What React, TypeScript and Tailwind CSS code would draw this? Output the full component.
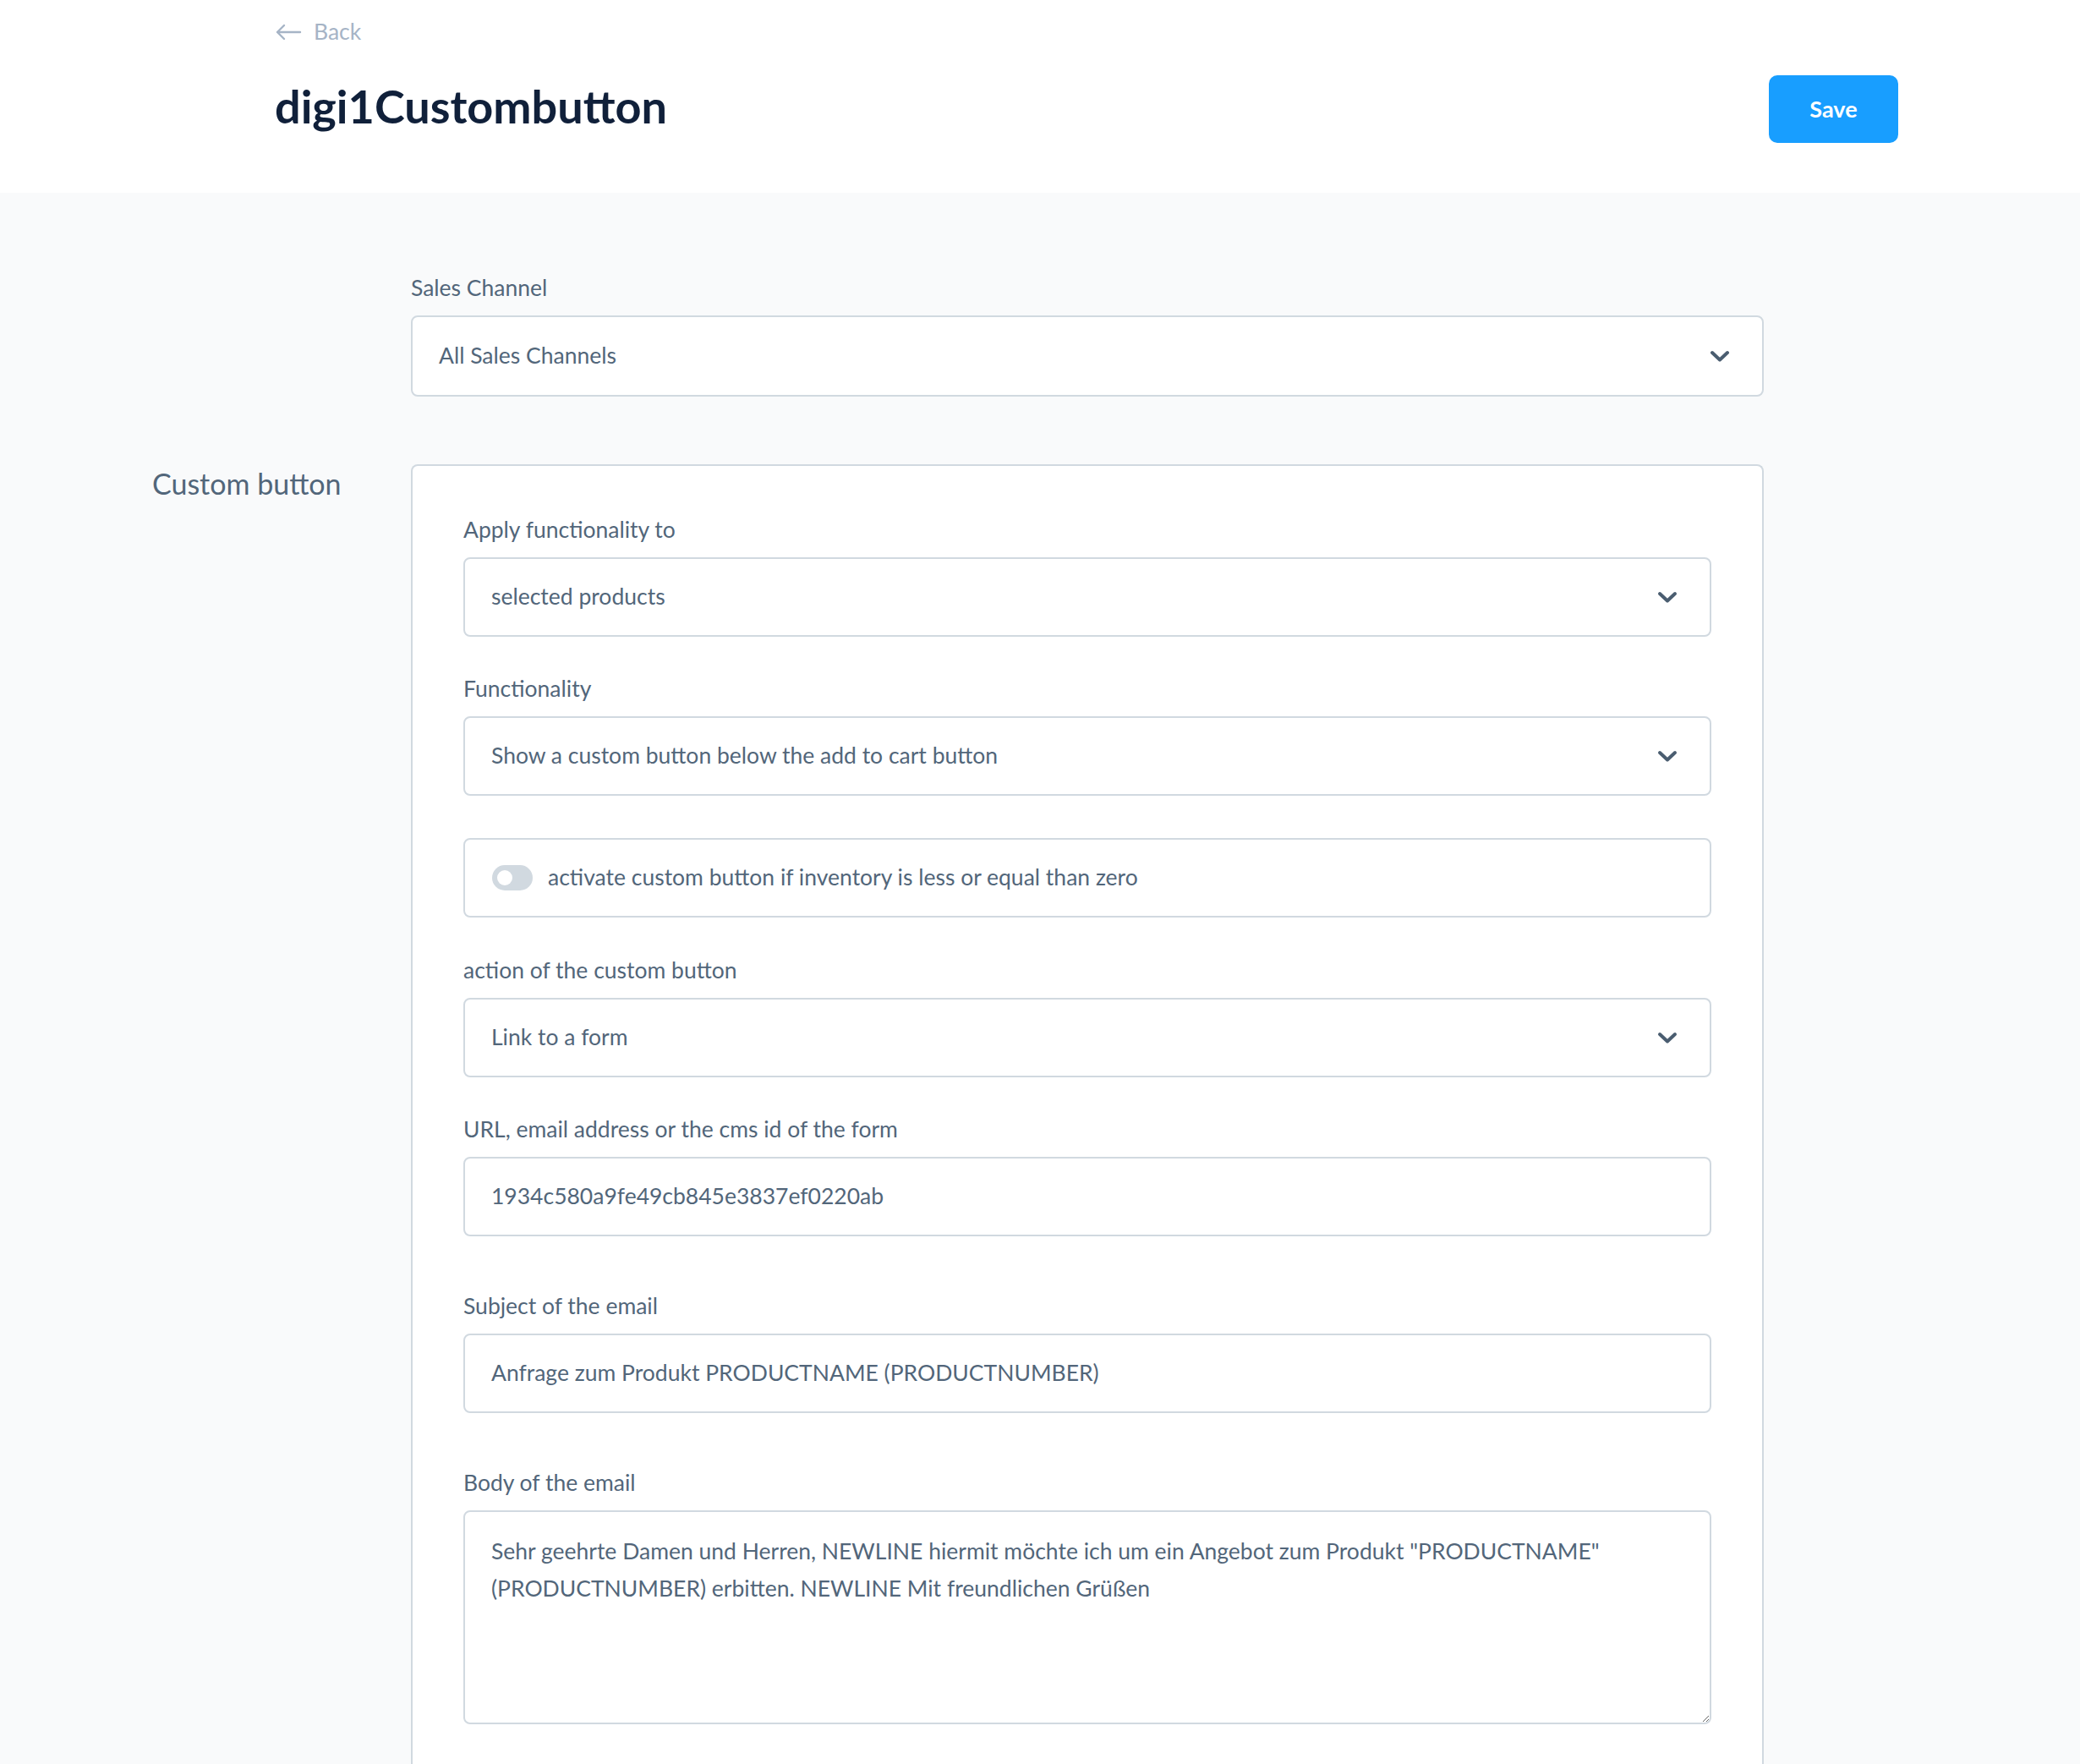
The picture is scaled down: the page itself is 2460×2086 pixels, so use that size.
import { ChangeEvent, useState } from "react"

const font = { fontFamily: "Lato, 'Noto Sans', sans-serif" }

function Chevron() {
  return (
    <svg className="w-[26px] h-[26px] text-[#4a5d70]" viewBox="0 0 26 26" fill="none" stroke="currentColor" strokeWidth={4} strokeLinecap="round" strokeLinejoin="round">
      <path d="M4 9l9 8.5 9-8.5" />
    </svg>
  )
}

function Label({ children, className = "" }: { children: React.ReactNode; className?: string }) {
  return <div className={"text-[26.5px] leading-[42px] text-[#52667a] mb-[12px] " + className}>{children}</div>
}

function Select({ value, className = "" }: { value: string; className?: string }) {
  return (
    <div className={"flex items-center justify-between bg-white border-2 border-[#d1d9e0] rounded-[8px] pl-[31px] pr-[37px] " + className}>
      <span className="text-[26.5px] text-[#52667a]">{value}</span>
      <Chevron />
    </div>
  )
}

function Input({ value }: { value: string }) {
  return (
    <div className="flex items-center h-[94px] bg-white border-2 border-[#d1d9e0] rounded-[8px] px-[31px]">
      <span className="text-[26.5px] text-[#52667a]">{value}</span>
    </div>
  )
}

export default function App() {
  const [active, setActive] = useState(false)
  const [body, setBody] = useState(
    'Sehr geehrte Damen und Herren, NEWLINE hiermit möchte ich um ein Angebot zum Produkt "PRODUCTNAME" (PRODUCTNUMBER) erbitten. NEWLINE Mit freundlichen Grüßen'
  )

  return (
    <div className="min-h-screen bg-[#f9fafb]" style={font}>
      <header className="h-[228px] bg-white flex justify-between pl-[325px] pr-[215px]">
        <div className="pt-[20px]">
          <div className="flex items-center gap-[14px] h-[36px] text-[#a6b4c6]">
            <svg className="w-[32px] h-[22px]" viewBox="0 0 32 22" fill="none" stroke="currentColor" strokeWidth={2.4} strokeLinecap="round" strokeLinejoin="round">
              <path d="M30 11H3M11 3L3 11l8 8" />
            </svg>
            <span className="text-[26.5px]">Back</span>
          </div>
          <h1 className="mt-[36px] text-[54px] leading-[68px] font-bold text-[#10203a]">digi1Custombutton</h1>
        </div>
        <button className="mt-[89px] h-[80px] w-[153px] rounded-[10px] bg-[#189eff] text-white text-[27px] font-bold">Save</button>
      </header>

      <main className="pl-[180px] pt-[91px]">
        <div className="grid grid-cols-[306px_1600px]">
          <div />
          <div>
            <Label>Sales Channel</Label>
            <Select value="All Sales Channels" className="h-[96px]" />
          </div>
        </div>

        <div className="grid grid-cols-[306px_1600px] mt-[80px]">
          <h2 className="text-[34px] leading-[46px] text-[#52667a]">Custom button</h2>
          <div className="bg-white border-2 border-[#d1d9e0] rounded-t-[8px] border-b-0 px-[60px] pt-[54px] pb-[80px]">
            <Label>Apply functionality to</Label>
            <Select value="selected products" className="h-[94px]" />

            <Label className="mt-[40px]">Functionality</Label>
            <Select value="Show a custom button below the add to cart button" className="h-[94px]" />

            <div className="mt-[50px] flex items-center gap-[18px] h-[94px] bg-white border-2 border-[#d1d9e0] rounded-[8px] px-[32px]">
              <button
                onClick={() => setActive(!active)}
                className="relative w-[48px] h-[30px] rounded-full bg-[#d1d9e0] shrink-0"
              >
                <span className="absolute left-[6px] top-[6px] w-[18px] h-[18px] rounded-full bg-white" />
              </button>
              <span className="text-[26.5px] text-[#52667a]">activate custom button if inventory is less or equal than zero</span>
            </div>

            <Label className="mt-[41px]">action of the custom button</Label>
            <Select value="Link to a form" className="h-[94px]" />

            <Label className="mt-[40px]">URL, email address or the cms id of the form</Label>
            <Input value="1934c580a9fe49cb845e3837ef0220ab" />

            <Label className="mt-[61px]">Subject of the email</Label>
            <Input value="Anfrage zum Produkt PRODUCTNAME (PRODUCTNUMBER)" />

            <Label className="mt-[61px]">Body of the email</Label>
            <textarea
              value={body}
              onChange={(e: ChangeEvent<HTMLTextAreaElement>) => setBody(e.target.value)}
              className="block w-full h-[253px] bg-white border-2 border-[#d1d9e0] rounded-[8px] px-[31px] py-[24px] text-[26.5px] leading-[44px] text-[#52667a] outline-none"
            />
          </div>
        </div>
      </main>
    </div>
  )
}
